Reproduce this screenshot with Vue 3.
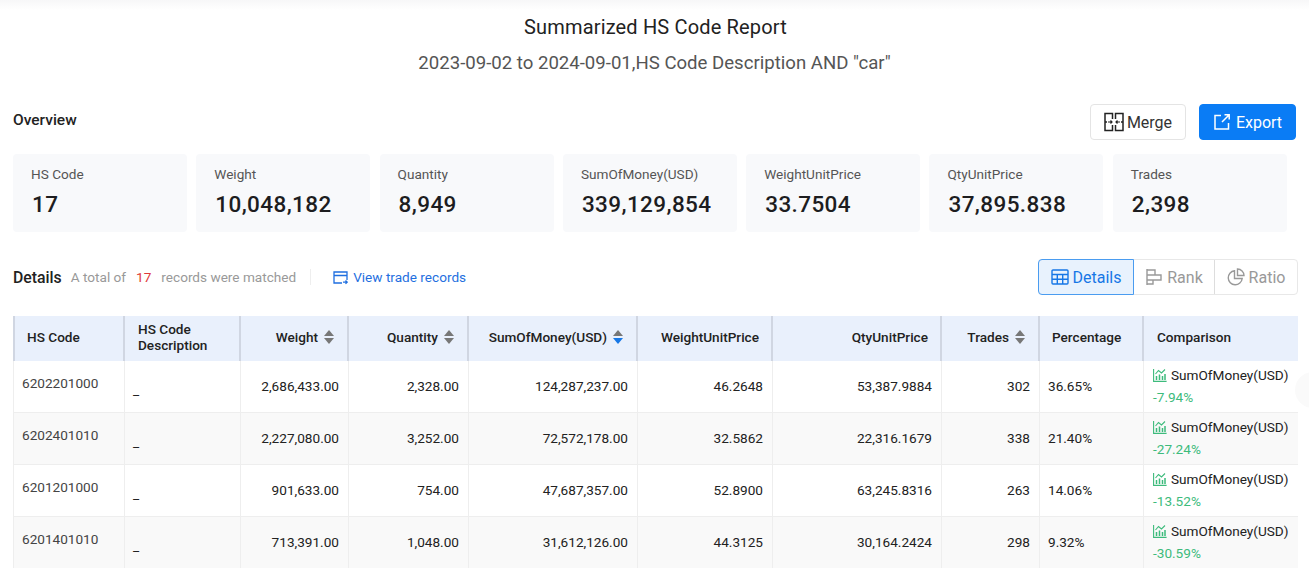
<script setup>
const cards = [
  { label: "HS Code", value: "17" },
  { label: "Weight", value: "10,048,182" },
  { label: "Quantity", value: "8,949" },
  { label: "SumOfMoney(USD)", value: "339,129,854" },
  { label: "WeightUnitPrice", value: "33.7504" },
  { label: "QtyUnitPrice", value: "37,895.838" },
  { label: "Trades", value: "2,398" },
];

const rows = [
  ["6202201000", "2,686,433.00", "2,328.00", "124,287,237.00", "46.2648", "53,387.9884", "302", "36.65%", "-7.94%"],
  ["6202401010", "2,227,080.00", "3,252.00", "72,572,178.00", "32.5862", "22,316.1679", "338", "21.40%", "-27.24%"],
  ["6201201000", "901,633.00", "754.00", "47,687,357.00", "52.8900", "63,245.8316", "263", "14.06%", "-13.52%"],
  ["6201401010", "713,391.00", "1,048.00", "31,612,126.00", "44.3125", "30,164.2424", "298", "9.32%", "-30.59%"],
];
</script>

<template>
  <div class="page">
    <h1 class="title">Summarized HS Code Report</h1>
    <p class="subtitle">2023-09-02 to 2024-09-01,HS Code Description AND "car"</p>

    <div class="overview-bar">
      <span class="overview">Overview</span>
      <div class="actions">
        <button class="btn">
          <svg width="20" height="20" viewBox="0 0 20 20" fill="none" stroke="#222" stroke-width="1.500">
            <path d="M8.500 7V1.500H1v17h7.500V13M1 10h2" />
            <path d="M11.500 7V1.500H19v17h-7.500V13M19 10h-2" />
            <path d="M4 10h4M6.500 8.500L8 10l-1.500 1.500M16 10h-4M13.500 8.500L12 10l1.500 1.500" stroke-width="1.200" />
          </svg>
          Merge
        </button>
        <button class="btn primary">
          <svg width="18" height="18" viewBox="0 0 18 18" fill="none" stroke="#fff" stroke-width="1.500">
            <path d="M8 2.500H2v13.500h13.500V10" />
            <path d="M9 9l7-7M11.500 1.800h4.700v4.700" />
          </svg>
          Export
        </button>
      </div>
    </div>

    <div class="cards">
      <div v-for="c in cards" :key="c.label" class="card">
        <div class="card-label">{{ c.label }}</div>
        <div class="card-value">{{ c.value }}</div>
      </div>
    </div>

    <div class="details-bar">
      <span class="details-title">Details</span>
      <span class="muted">A total of</span>
      <span class="count">17</span>
      <span class="muted">records were matched</span>
      <span class="sep"></span>
      <a class="link">
        <svg width="15" height="15" viewBox="0 0 15 15" fill="none" stroke="#1f6fe0" stroke-width="1.300">
          <path d="M9 13H1v-11h13v8M1 5.500h13" />
          <path d="M10 12.200h4M12.500 10.500l1.700 1.700-1.700 1.700" />
        </svg>
        View trade records
      </a>
      <div class="tabs">
        <div class="tab active">
          <svg width="18" height="18" viewBox="0 0 18 18" fill="none" stroke="#1677e6" stroke-width="1.400">
            <rect x="1" y="2" width="16" height="14" rx="1" />
            <path d="M1 6.500h16M1 11.200h16M6.300 6.500V16M11.700 6.500V16" />
          </svg>
          Details
        </div>
        <div class="tab">
          <svg width="18" height="18" viewBox="0 0 18 18" fill="none" stroke="#999" stroke-width="1.400">
            <path d="M2 1v16M2 2h8v5H2M2 7h14v5H2M2 12h6v4H2" />
          </svg>
          Rank
        </div>
        <div class="tab ratio">
          <svg width="18" height="18" viewBox="0 0 18 18" fill="none" stroke="#999" stroke-width="1.400">
            <path d="M7.500 2.800a7 7 0 1 0 7.700 7.700H7.500z" />
            <path d="M10.500 1a6.500 6.500 0 0 1 6.500 6.500h-6.500z" />
          </svg>
          Ratio
        </div>
      </div>
    </div>

    <div class="table">
      <div class="row head">
        <div class="cell">HS Code</div>
        <div class="cell desc-head">HS Code<br />Description</div>
        <div class="cell right">Weight<i class="sort"></i></div>
        <div class="cell right">Quantity<i class="sort"></i></div>
        <div class="cell right">SumOfMoney(USD)<i class="sort on"></i></div>
        <div class="cell right">WeightUnitPrice</div>
        <div class="cell right">QtyUnitPrice</div>
        <div class="cell right">Trades<i class="sort"></i></div>
        <div class="cell pct">Percentage</div>
        <div class="cell">Comparison</div>
      </div>
      <div v-for="r in rows" :key="r[0]" class="row body">
        <div class="cell code">{{ r[0] }}</div>
        <div class="cell dash">_</div>
        <div class="cell right">{{ r[1] }}</div>
        <div class="cell right">{{ r[2] }}</div>
        <div class="cell right">{{ r[3] }}</div>
        <div class="cell right">{{ r[4] }}</div>
        <div class="cell right">{{ r[5] }}</div>
        <div class="cell right">{{ r[6] }}</div>
        <div class="cell pct">{{ r[7] }}</div>
        <div class="cell compare">
          <div class="compare-name">
            <svg width="14" height="14" viewBox="0 0 14 14" fill="none" stroke="#3dbb7c" stroke-width="1.100">
              <path d="M.6 1v12.400h13" />
              <path d="M2.500 6l3-3.500 3 2.500 3.500-3.500" />
              <path d="M3.500 12V8M6.500 12V6.500M9.500 12V8M12 12V6" stroke-width="1.500" />
            </svg>
            SumOfMoney(USD)
          </div>
          <div class="delta">{{ r[8] }}</div>
        </div>
      </div>
    </div>
    <div class="edge-dot"></div>
  </div>
</template>

<style scoped>
.page {
  position: relative;
  width: 1309px;
  height: 568px;
  overflow: hidden;
  box-sizing: border-box;
  padding: 0 11px 0 13px;
  background: linear-gradient(#f7f7f8, #fff 10px);
  font-family: Roboto, "Liberation Sans", sans-serif;
  color: #222;
}
.title {
  margin: 0;
  padding-top: 14px;
  text-align: center;
  font-size: 20px;
  line-height: 26px;
  font-weight: 400;
  letter-spacing: 0.16px;
  color: #222;
}
.subtitle {
  margin: 10px 2px 0 0;
  text-align: center;
  font-size: 18.6px;
  line-height: 26px;
  color: #555;
}
.overview-bar {
  display: flex;
  justify-content: space-between;
  margin-top: 28px;
  height: 36px;
  padding-right: 2px;
}
.overview {
  font-size: 15.500px;
  font-weight: 500;
  line-height: 33px;
}
.actions {
  display: flex;
  gap: 13px;
}
.btn {
  display: flex;
  align-items: center;
  justify-content: center;
  gap: 3px;
  width: 96px;
  height: 36px;
  box-sizing: border-box;
  border: 1px solid #e4e4e4;
  border-radius: 4px;
  background: #fff;
  font-family: inherit;
  font-size: 16px;
  color: #333;
  padding: 0;
}
.btn.primary {
  width: 97px;
  gap: 5px;
  border-color: #0a7cf5;
  background: #0a7cf5;
  color: #fff;
}
.cards {
  display: flex;
  gap: 9.3px;
  margin-top: 14px;
}
.card {
  width: 174px;
  height: 78px;
  box-sizing: border-box;
  padding: 12px 18px 0;
  border-radius: 4px;
  background: #f8f9fb;
  flex: none;
}
.card-label {
  font-size: 13.6px;
  line-height: 16px;
  color: #555;
}
.card-value {
  margin-top: 8px;
  padding-left: 1px;
  font-size: 22.500px;
  line-height: 28px;
  font-weight: 500;
  letter-spacing: 0.4px;
  color: #1d1d1f;
}
.details-bar {
  display: flex;
  align-items: center;
  height: 38px;
  margin-top: 26px;
}
.details-title {
  font-size: 15.800px;
  font-weight: 500;
  margin-right: 9px;
}
.muted {
  font-size: 13.6px;
  color: #999;
}
.count {
  font-size: 13.6px;
  color: #e0393a;
  margin: 0 10px;
}
.sep {
  width: 1px;
  height: 16px;
  background: #eee;
  margin: 0 22px 0 14px;
}
.link {
  display: flex;
  align-items: center;
  gap: 5px;
  font-size: 13.6px;
  color: #1f6fe0;
}
.tabs {
  display: flex;
  margin-left: auto;
  height: 36px;
  box-sizing: border-box;
  border: 1px solid #e8e8e8;
  border-radius: 4px;
}
.tab {
  display: flex;
  align-items: center;
  justify-content: center;
  gap: 4px;
  width: 81px;
  font-size: 16px;
  color: #999;
  border-right: 1px solid #ddd;
  box-sizing: border-box;
}
.tab.ratio {
  width: 82px;
  border-right: 0;
}
.tab.active {
  width: 96px;
  margin: -1px 0 -1px -1px;
  border: 1px solid #4a9cf0;
  border-radius: 4px 0 0 4px;
  background: #e8f2fd;
  color: #1677e6;
}
.table {
  margin-top: 20px;
  width: 1285px;
  font-size: 13.6px;
}
.row {
  display: grid;
  grid-template-columns: 112px 116px 108px 120px 169px 135px 169px 98px 104px 154px;
}
.head {
  height: 45px;
  background: #e9f0fc;
  font-weight: 500;
  color: #222;
}
.head .cell {
  display: flex;
  align-items: center;
  padding: 0 13px 3px;
  border-right: 2px solid #d0d6e2;
  box-sizing: border-box;
}
.head .cell:first-child {
  border-left: 2px solid #d0d6e2;
  padding-left: 12px;
}
.head .cell:last-child {
  border-right: 0;
}
.head .right {
  justify-content: flex-end;
  padding-right: 8px;
}
.head .cell:nth-child(6),
.head .cell:nth-child(7) {
  padding-right: 12px;
}
.head .pct {
  padding-left: 12px;
}
.desc-head {
  line-height: 16px;
}
.sort {
  position: relative;
  display: block;
  width: 10px;
  height: 14px;
  margin-left: 6px;
  margin-right: 5px;
}
.sort::before,
.sort::after {
  content: "";
  position: absolute;
  left: 0;
  border-left: 5px solid transparent;
  border-right: 5px solid transparent;
}
.sort::before {
  top: 0;
  border-bottom: 6px solid #777;
}
.sort::after {
  bottom: 0;
  border-top: 6px solid #777;
}
.sort.on::after {
  border-top-color: #1677e6;
}
.body {
  height: 52px;
  border-bottom: 1px solid #eee;
  box-sizing: border-box;
  color: #222;
}
.body:nth-child(odd) {
  background: #f9f9f9;
}
.body .cell {
  display: flex;
  align-items: center;
  padding: 0 9px 2px;
  border-right: 1px solid #eee;
  box-sizing: border-box;
}
.body .cell:first-child {
  border-left: 1px solid #eee;
  padding-left: 8px;
  align-items: flex-start;
  padding-top: 14px;
  color: #444;
}
.body .cell:last-child {
  border-right: 0;
}
.body .right {
  justify-content: flex-end;
}
.body .pct {
  padding-left: 8px;
}
.body .dash {
  padding: 6px 0 0 8px;
}
.body .compare {
  display: block;
  padding: 3px 0 0 9px;
  white-space: nowrap;
}
.compare-name {
  display: flex;
  align-items: center;
  gap: 4px;
  height: 21px;
}
.delta {
  margin-top: 3px;
  line-height: 18px;
  color: #3dbb7c;
}
.edge-dot {
  position: absolute;
  right: -22px;
  top: 372px;
  width: 36px;
  height: 36px;
  border-radius: 50%;
  background: #fafafa;
}
</style>

<style>
html,
body {
  margin: 0;
  background: #fff;
}
</style>
